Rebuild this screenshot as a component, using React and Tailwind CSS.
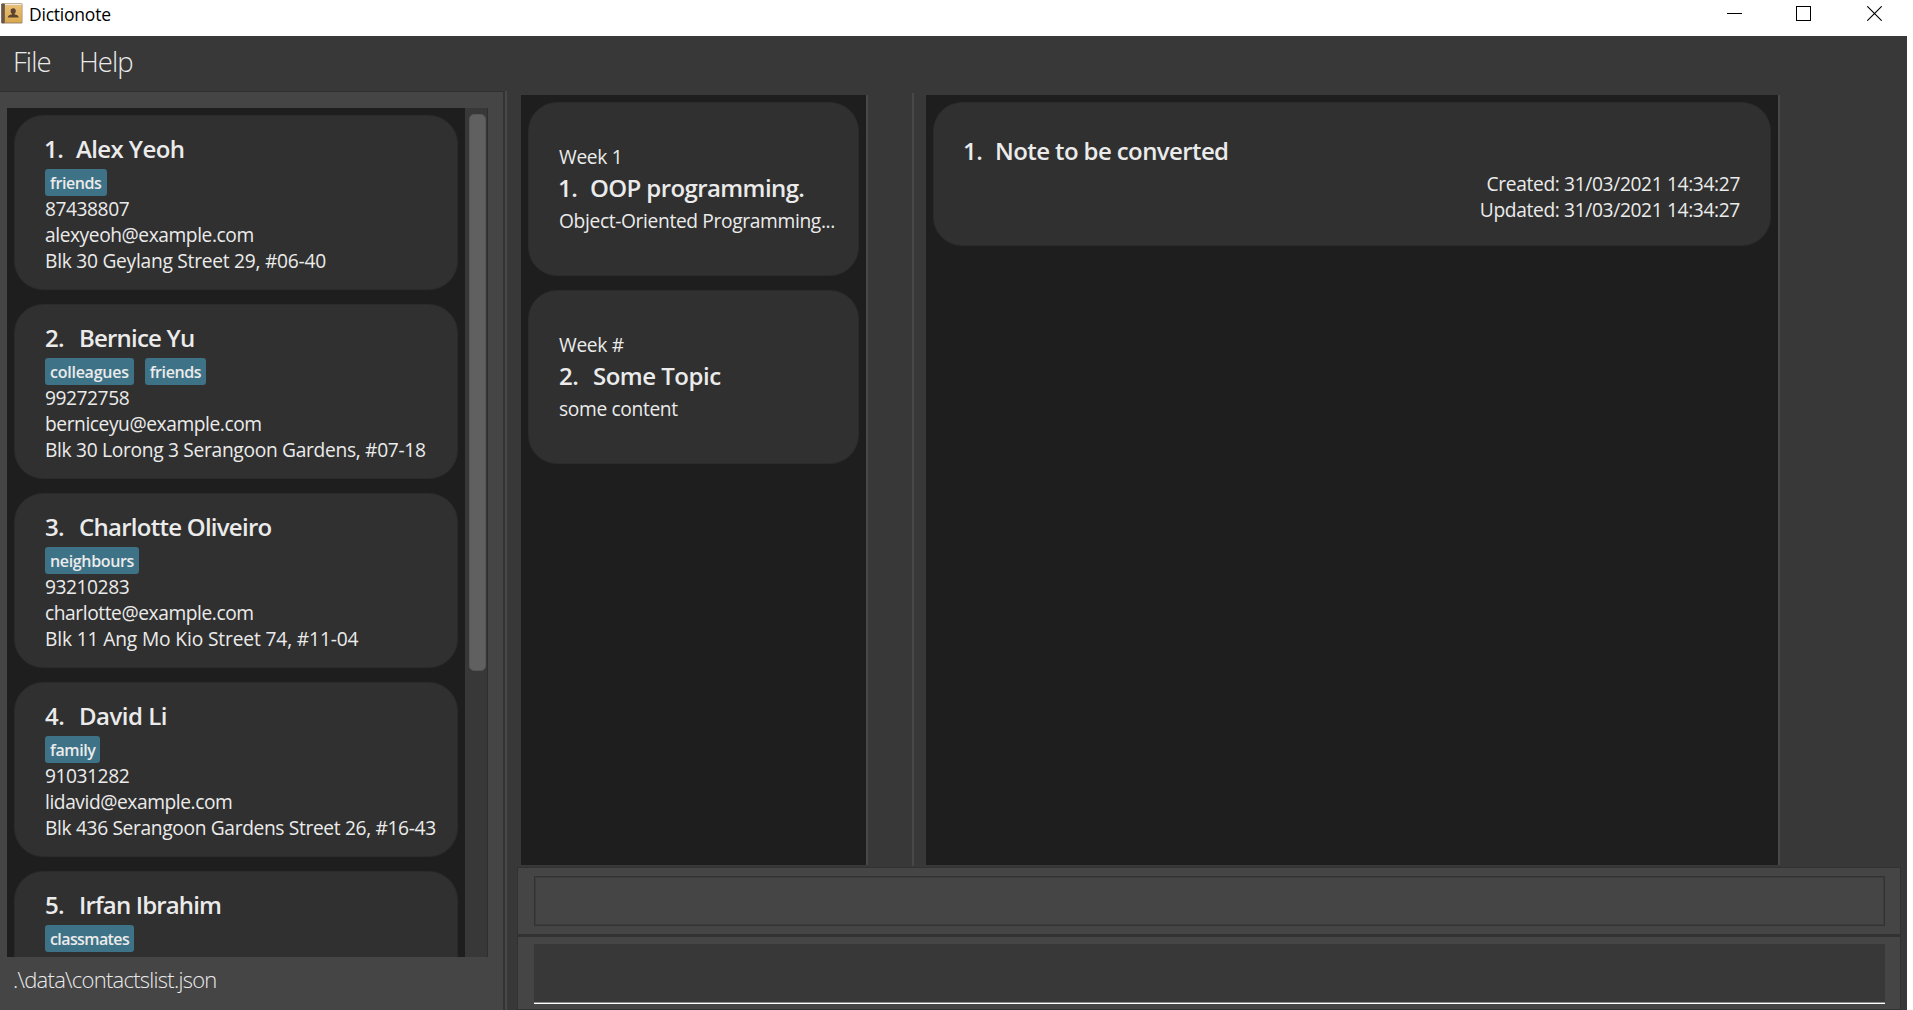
import React from "react";

const contacts = [
  { name: "Alex Yeoh", tags: ["friends"], phone: "87438807", email: "alexyeoh@example.com", address: "Blk 30 Geylang Street 29, #06-40", nameFit: "tracking-[-0.6px]", addressFit: "tracking-[-0.26px]" },
  { name: "Bernice Yu", tags: ["colleagues", "friends"], phone: "99272758", email: "berniceyu@example.com", address: "Blk 30 Lorong 3 Serangoon Gardens, #07-18", nameFit: "tracking-[-0.8px]", addressFit: "tracking-[-0.31px]" },
  { name: "Charlotte Oliveiro", tags: ["neighbours"], phone: "93210283", email: "charlotte@example.com", address: "Blk 11 Ang Mo Kio Street 74, #11-04", nameFit: "tracking-[-0.74px]", addressFit: "tracking-[-0.14px]" },
  { name: "David Li", tags: ["family"], phone: "91031282", email: "lidavid@example.com", address: "Blk 436 Serangoon Gardens Street 26, #16-43", nameFit: "tracking-[-0.5px]", addressFit: "tracking-[-0.35px]" },
  { name: "Irfan Ibrahim", tags: ["classmates"], phone: "", email: "", address: "", nameFit: "tracking-[-0.85px]", addressFit: "" },
];

const contents = [
  { week: "Week 1", title: "OOP programming.", body: "Object-Oriented Programming...", titleFit: "tracking-[-0.6px]" },
  { week: "Week #", title: "Some Topic", body: "some content", titleFit: "tracking-[-0.5px]" },
];

const tagFit = {
  friends: "tracking-[-0.4px]",
  colleagues: "tracking-[-0.25px]",
  neighbours: "tracking-[-0.35px]",
  family: "tracking-[-0.4px]",
  classmates: "tracking-[-0.6px]",
};

function BookIcon() {
  return (
    <svg className="h-[21px] w-[22px]" viewBox="0 0 22 21">
      <defs>
        <linearGradient id="cover" x1="0" y1="0" x2="0" y2="1">
          <stop offset="0" stopColor="#e9bf74" />
          <stop offset="1" stopColor="#d9a84f" />
        </linearGradient>
      </defs>
      <rect x="0.3" y="0.3" width="21.2" height="20.2" rx="1.2" fill="#a08766" />
      <rect x="4" y="2.2" width="16.8" height="17.2" fill="url(#cover)" />
      <rect x="4" y="0.8" width="16.8" height="1.4" fill="#f3ead8" />
      <rect x="0.3" y="0.8" width="3.4" height="19.4" rx="0.8" fill="#6b5648" />
      <path d="M12.2 5.2c1.7 0 2.6 1.1 2.6 2.7 0 1.2-.5 2.1-1.2 2.7v.9c1.9.3 4 .9 4.1 3.1H6.800c.1-2.2 2.200-2.800 4.100-3.100v-.9c-.8-.6-1.300-1.500-1.300-2.700 0-1.600 1-2.700 2.600-2.700z" fill="#594231" />
    </svg>
  );
}

function Card({ className, children }) {
  return (
    <div className={`shrink-0 rounded-[29px] border border-[#2b2b2b] bg-[#303030] px-[30px] ${className}`}>
      {children}
    </div>
  );
}

function Heading({ index, fit, children }) {
  return (
    <div className={`flex h-8 text-[24px] leading-8 font-[560] whitespace-nowrap ${fit}`}>
      <span className={index === 1 ? "-ml-px w-8" : "w-[34px]"}>{index}.</span>
      <span>{children}</span>
    </div>
  );
}

function TitleBar() {
  return (
    <header className="flex h-9 items-start justify-between bg-white pl-px text-black">
      <div className="flex pt-[3px]">
        <BookIcon />
        <span className="-mt-[1px] ml-1.5 text-[17.5px] leading-6 tracking-[-0.22px]">Dictionote</span>
      </div>
      <div className="flex pt-1.5 pr-[31px]">
        <svg className="h-[15px] w-[15px]" viewBox="0 0 15 15" shapeRendering="crispEdges">
          <path d="M0 7.5H15" stroke="#000" />
        </svg>
        <svg className="ml-[54px] h-[15px] w-[15px]" viewBox="0 0 15 15" shapeRendering="crispEdges">
          <rect x="0.5" y="0.5" width="14" height="14" fill="none" stroke="#000" />
        </svg>
        <svg className="ml-14 h-[15px] w-[15px]" viewBox="0 0 15 15">
          <path d="M0.3 0.3L14.7 14.7M14.7 0.3L0.3 14.7" stroke="#000" strokeWidth="1.1" />
        </svg>
      </div>
    </header>
  );
}

function ContactPanel() {
  return (
    <aside className="flex w-[505px] shrink-0 flex-col border-t border-r-2 border-t-[#303030] border-r-[#333333] bg-[#454545] pt-4 pl-[7px]">
      <div className="flex h-[849px] w-[481px] bg-[#1e1e1e]">
        <div className="flex w-[458px] flex-col gap-[14px] overflow-hidden pt-[7px] pr-[7px] pl-[7px]">
          {contacts.map((c, i) => (
            <Card key={c.name} className="h-[175px] pt-[17px]">
              <Heading index={i + 1} fit={c.nameFit}>{c.name}</Heading>
              <div className="mt-1 flex h-[27px] gap-[11px]">
                {c.tags.map((t) => (
                  <span key={t} className={`rounded-[3px] bg-[#3e7287] px-[5px] pt-px text-[16px] leading-[27px] font-[560] ${tagFit[t]}`}>
                    {t}
                  </span>
                ))}
              </div>
              <div className="text-[19.2px] leading-[26px] whitespace-nowrap">
                <p className="tracking-[-0.45px]">{c.phone}</p>
                <p className="tracking-[-0.43px]">{c.email}</p>
                <p className={c.addressFit}>{c.address}</p>
              </div>
            </Card>
          ))}
        </div>
        <div className="flex-1 border-r border-[#2e2e2e] bg-[#383838] pt-1.5 pl-1">
          <div className="h-[557px] w-[17px] rounded-[5px] border border-[#555555] bg-[#606060]" />
        </div>
      </div>
      <div className="pt-[7px] pl-1.5 text-[22px] leading-[30px] font-light tracking-[-0.74px]">
        .\data\contactslist.json
      </div>
    </aside>
  );
}

function ContentList() {
  return (
    <div className="mt-1 flex h-[770px] w-[347px] flex-col gap-[14px] border-r-2 border-[#484848] bg-[#1e1e1e] px-[7px] pt-[7px]">
      {contents.map((c, i) => (
        <Card key={c.title} className="h-[174px] pt-[41px] text-[19.2px] leading-[26px] whitespace-nowrap">
          <p className="tracking-[-0.33px]">{c.week}</p>
          <div className="mt-0.5 mb-1">
            <Heading index={i + 1} fit={c.titleFit}>{c.title}</Heading>
          </div>
          <p className="tracking-[-0.35px]">{c.body}</p>
        </Card>
      ))}
    </div>
  );
}

function NoteList() {
  return (
    <div className="mt-1 ml-3 h-[770px] w-[854px] border-r-2 border-[#484848] bg-[#1e1e1e] px-[7px] pt-[7px]">
      <Card className="h-36 pt-8">
        <Heading index={1} fit="tracking-[-0.6px]">Note to be converted</Heading>
        <div className="mt-1 text-right text-[19.2px] leading-[26px] tracking-[-0.36px]">
          <p>Created: 31/03/2021 14:34:27</p>
          <p>Updated: 31/03/2021 14:34:27</p>
        </div>
      </Card>
    </div>
  );
}

function ConsoleArea() {
  return (
    <div className="mt-px ml-2.5 w-[1384px]">
      <div className="h-[68px] border border-[#323232] bg-[#454545] pt-2 pr-[15px] pl-4">
        <div className="h-[50px] border border-[#323232] bg-[#454545] shadow-[inset_0_0_0_1px_#3c3c3c]" />
      </div>
      <div className="h-[75px] border border-t-2 border-[#323232] bg-[#454545] pt-[7px] pr-[15px] pl-4">
        <div className="h-[60px] border-b border-white bg-[#383838] shadow-[inset_0_-1px_0_#8a8a8a]" />
      </div>
    </div>
  );
}

export default function App() {
  return (
    <div className="h-[1010px] w-[1913px] overflow-hidden bg-white font-['Open_Sans','Noto_Sans',sans-serif] text-[#ebebeb]">
      <TitleBar />
      <div className="h-[974px] w-[1907px] bg-[#383838]">
        <nav className="flex h-[55px] gap-[26px] pt-2 pl-[13px] text-[27.5px] leading-9 font-light tracking-[-0.95px]">
          <span className="w-[40px]">File</span>
          <span>Help</span>
        </nav>
        <div className="flex h-[919px]">
          <ContactPanel />
          <main className="flex-1 border-l-2 border-[#484848]">
            <div className="flex h-[775px] pl-3.5">
              <ContentList />
              <div className="mt-0.5 ml-11 w-0.5 self-stretch bg-[#484848]" />
              <NoteList />
            </div>
            <ConsoleArea />
          </main>
        </div>
      </div>
    </div>
  );
}
